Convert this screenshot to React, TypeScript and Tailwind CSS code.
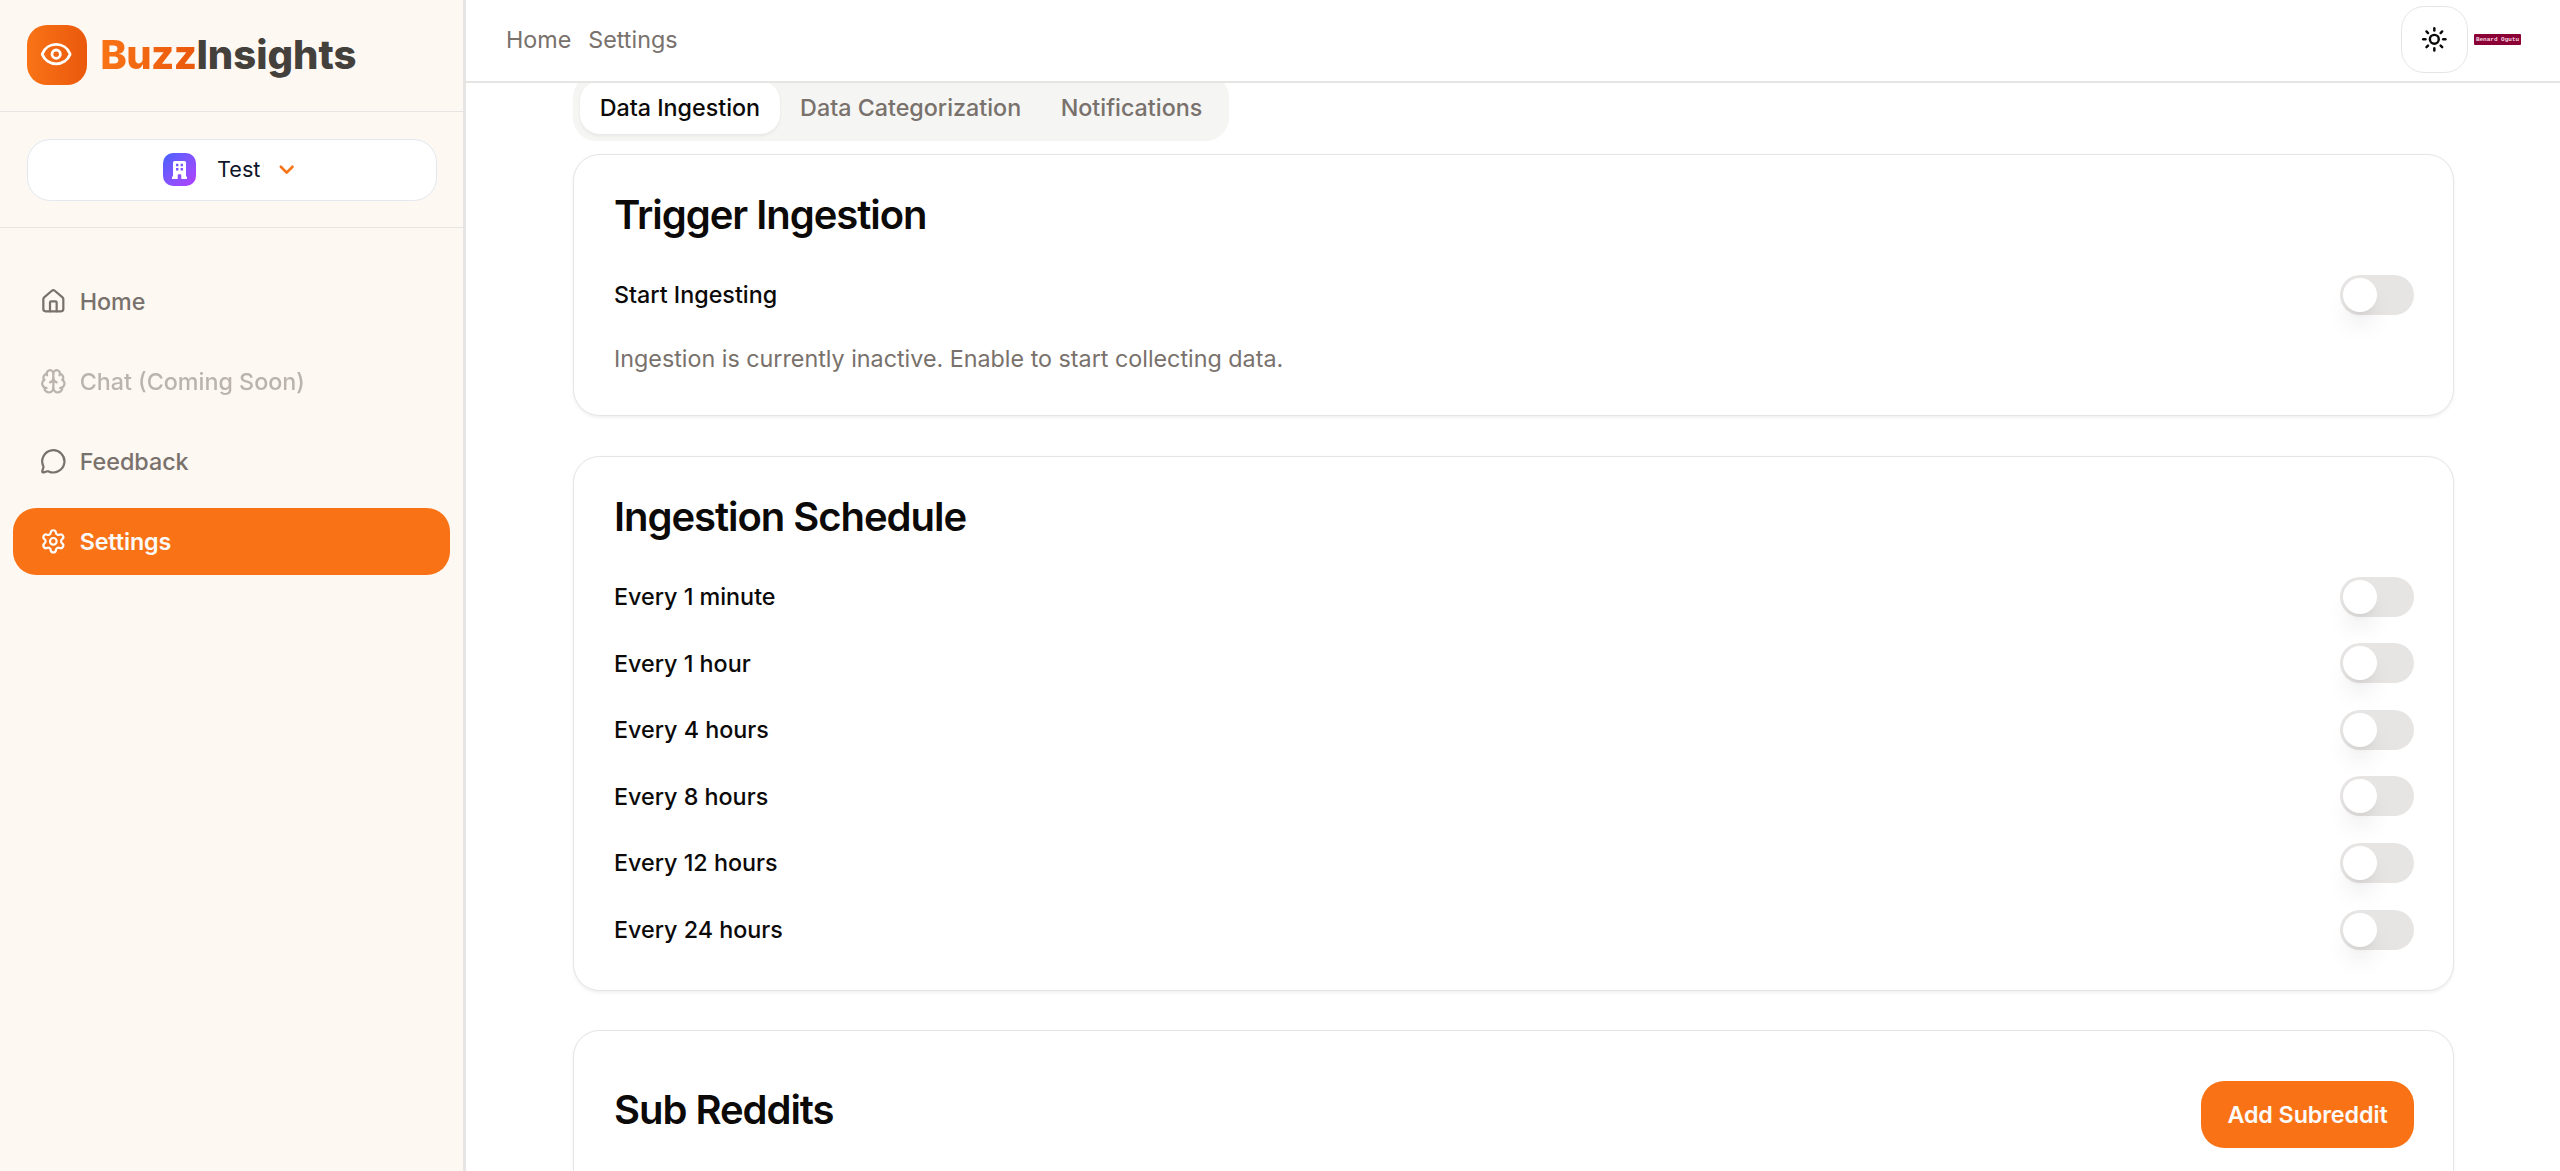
import React from "react";
import { Eye, House, Brain, MessageCircle, Settings, ChevronDown, Sun } from "lucide-react";

function Toggle() {
  return (
    <button
      role="switch"
      aria-checked={false}
      className="flex h-[40px] w-[74px] shrink-0 items-center rounded-full bg-[#e7e5e4] pl-[3px]"
    >
      <span className="block size-[34px] rounded-full bg-white shadow-[0_16.67px_25px_-5px_rgba(0,0,0,0.1),0_6.67px_10px_-6.67px_rgba(0,0,0,0.1)]" />
    </button>
  );
}

function Card({ children, className = "" }: { children: React.ReactNode; className?: string }) {
  return (
    <section
      className={
        "rounded-[26.67px] border border-[#e5e5e5] bg-white pr-[39px] pl-[40px] shadow-[0_1.67px_3.33px_0_rgba(0,0,0,0.06)] " +
        className
      }
    >
      {children}
    </section>
  );
}

function Title({ children }: { children: React.ReactNode }) {
  return <h3 className="text-[40px] leading-[40px] font-semibold tracking-[-1.04px]">{children}</h3>;
}

function Row({ label }: { label: string }) {
  return (
    <div className="flex h-[40px] items-center justify-between">
      <span className="leading-[23.33px] font-medium">{label}</span>
      <Toggle />
    </div>
  );
}

const nav = [
  { label: "Home", icon: House, style: "font-medium text-[#78716c]" },
  { label: "Chat (Coming Soon)", icon: Brain, style: "font-medium text-[#78716c] opacity-50" },
  { label: "Feedback", icon: MessageCircle, style: "font-medium text-[#78716c]" },
  { label: "Settings", icon: Settings, style: "bg-[#f97316] font-semibold tracking-[-0.1px] text-[#fafaf9]" },
];

const schedule = ["Every 1 minute", "Every 1 hour", "Every 4 hours", "Every 8 hours", "Every 12 hours", "Every 24 hours"];

function Sidebar() {
  return (
    <aside className="flex w-[466px] shrink-0 flex-col border-r-[3px] border-[#e7e5e4] bg-[#fef8f2]">
      <div className="flex h-[112px] items-start gap-[13.33px] border-b border-[#e7e5e4] pt-[25px] pl-[27px]">
        <div className="flex size-[60px] items-center justify-center rounded-[20px] bg-linear-to-r from-[#f97316] to-[#ea580c]">
          <Eye className="size-[33.33px] -translate-x-[0.5px] -translate-y-[0.5px] text-white" />
        </div>
        <div className="text-[40px] leading-[60px] font-extrabold text-[#44403c]">
          <span className="bg-linear-to-r from-[#f97316] to-[#ea580c] bg-clip-text tracking-[-0.6px] text-transparent">
            Buzz
          </span>
          <span>Insights</span>
        </div>
      </div>
      <div className="h-[116px] border-b border-[#e7e5e4] px-[27px] pt-[27px]">
        <button className="flex h-[62px] w-[410px] items-center rounded-[23.33px] border border-[#e2e8f0] bg-white pb-[1px] pl-[135px]">
          <span className="flex size-[33px] items-center justify-center rounded-[10px] bg-linear-to-br from-[#4060ff] to-[#b03eff]">
            <svg viewBox="0 0 15 18" className="h-[18px] w-[15px] fill-white">
              <path
                fillRule="evenodd"
                d="M2.500 0h10A1.500 1.500 0 0 1 14 1.500V15.500h1V18H9.300V14.200a1 1 0 0 0-1-1H6.700a1 1 0 0 0-1 1V18H0v-2.500h1V1.500A1.500 1.500 0 0 1 2.500 0zM4 2.800v2.400h2.400V2.800zM8.600 2.800v2.400H11V2.800zM4 7.100v2.400h2.400V7.100zM8.600 7.100v2.400H11V7.100z"
              />
            </svg>
          </span>
          <span className="ml-[21px] w-[43px] text-[21.67px] text-[#0f172a]">Test</span>
          <ChevronDown strokeWidth={2.7} className="ml-[15px] size-[23.33px] text-[#f97316]" />
        </button>
      </div>
      <nav className="flex flex-col gap-[13.33px] pt-[40px] pr-[13px] pl-[13px]">
        {nav.map(({ label, icon: Icon, style }) => (
          <a
            key={label}
            className={"flex h-[66.67px] items-center gap-[13.33px] rounded-[23.33px] pl-[26.67px] " + style}
          >
            <Icon className="size-[26.67px]" />
            {label}
          </a>
        ))}
      </nav>
    </aside>
  );
}

export default function App() {
  return (
    <div className="flex h-[1171px] w-[2560px] overflow-hidden bg-white font-[Inter,sans-serif] text-[23.3px] leading-[33.33px] text-[#0c0a09]">
      <Sidebar />
      <main className="flex min-w-0 flex-1 flex-col">
        <header className="z-10 flex h-[83px] shrink-0 justify-between border-b-2 border-[#e7e5e4] bg-white pr-[39px] pl-[40px]">
          <div className="flex h-[79px] items-center gap-[17px] text-[#78716c]">
            <span>Home</span>
            <span>Settings</span>
          </div>
          <div className="flex h-[79px] items-center gap-[6px]">
            <button className="flex size-[67px] items-center justify-center rounded-[23.33px] border border-[#e7e5e4]">
              <Sun strokeWidth={2.2} className="size-[26.67px]" />
            </button>
            <div className="flex h-[11px] w-[47px] items-center justify-center rounded-[1px] bg-[#8b0035] font-['Liberation_Mono',monospace] text-[6px] leading-none font-bold whitespace-nowrap text-[#f5d9e4]">
              Benard Ogutu
            </div>
          </div>
        </header>
        <div className="-mt-[8.67px] flex w-[1988px] flex-col pl-[107px]">
          <div className="flex h-[66.67px] w-[656px] items-center rounded-[23.33px] bg-[#f5f5f4] p-[6.67px] font-medium whitespace-nowrap text-[#78716c]">
            <div className="flex h-[53.33px] items-center rounded-[20px] bg-white px-[20px] text-[#0c0a09] shadow-[0_1.67px_3.33px_0_rgba(0,0,0,0.06)]">
              Data Ingestion
            </div>
            <div className="px-[20px]">Data Categorization</div>
            <div className="px-[19.5px]">Notifications</div>
          </div>
          <Card className="mt-[13px] h-[262px] pt-[40px]">
            <Title>Trigger Ingestion</Title>
            <div className="mt-[40px]">
              <Row label="Start Ingesting" />
            </div>
            <p className="mt-[26.67px] text-[#78716c]">Ingestion is currently inactive. Enable to start collecting data.</p>
          </Card>
          <Card className="mt-[40px] h-[535px] pt-[40px]">
            <Title>Ingestion Schedule</Title>
            <div className="mt-[39.7px] flex flex-col gap-[26.6px]">
              {schedule.map((s) => (
                <Row key={s} label={s} />
              ))}
            </div>
          </Card>
          <Card className="mt-[39px] h-[400px] pt-[50px]">
            <div className="flex items-start justify-between">
              <div className="pt-[9px]">
                <Title>Sub Reddits</Title>
              </div>
              <button className="h-[67px] w-[213px] rounded-[23.33px] bg-[#f97316] font-semibold tracking-[-0.1px] text-[#fafaf9]">
                Add Subreddit
              </button>
            </div>
          </Card>
        </div>
      </main>
    </div>
  );
}
